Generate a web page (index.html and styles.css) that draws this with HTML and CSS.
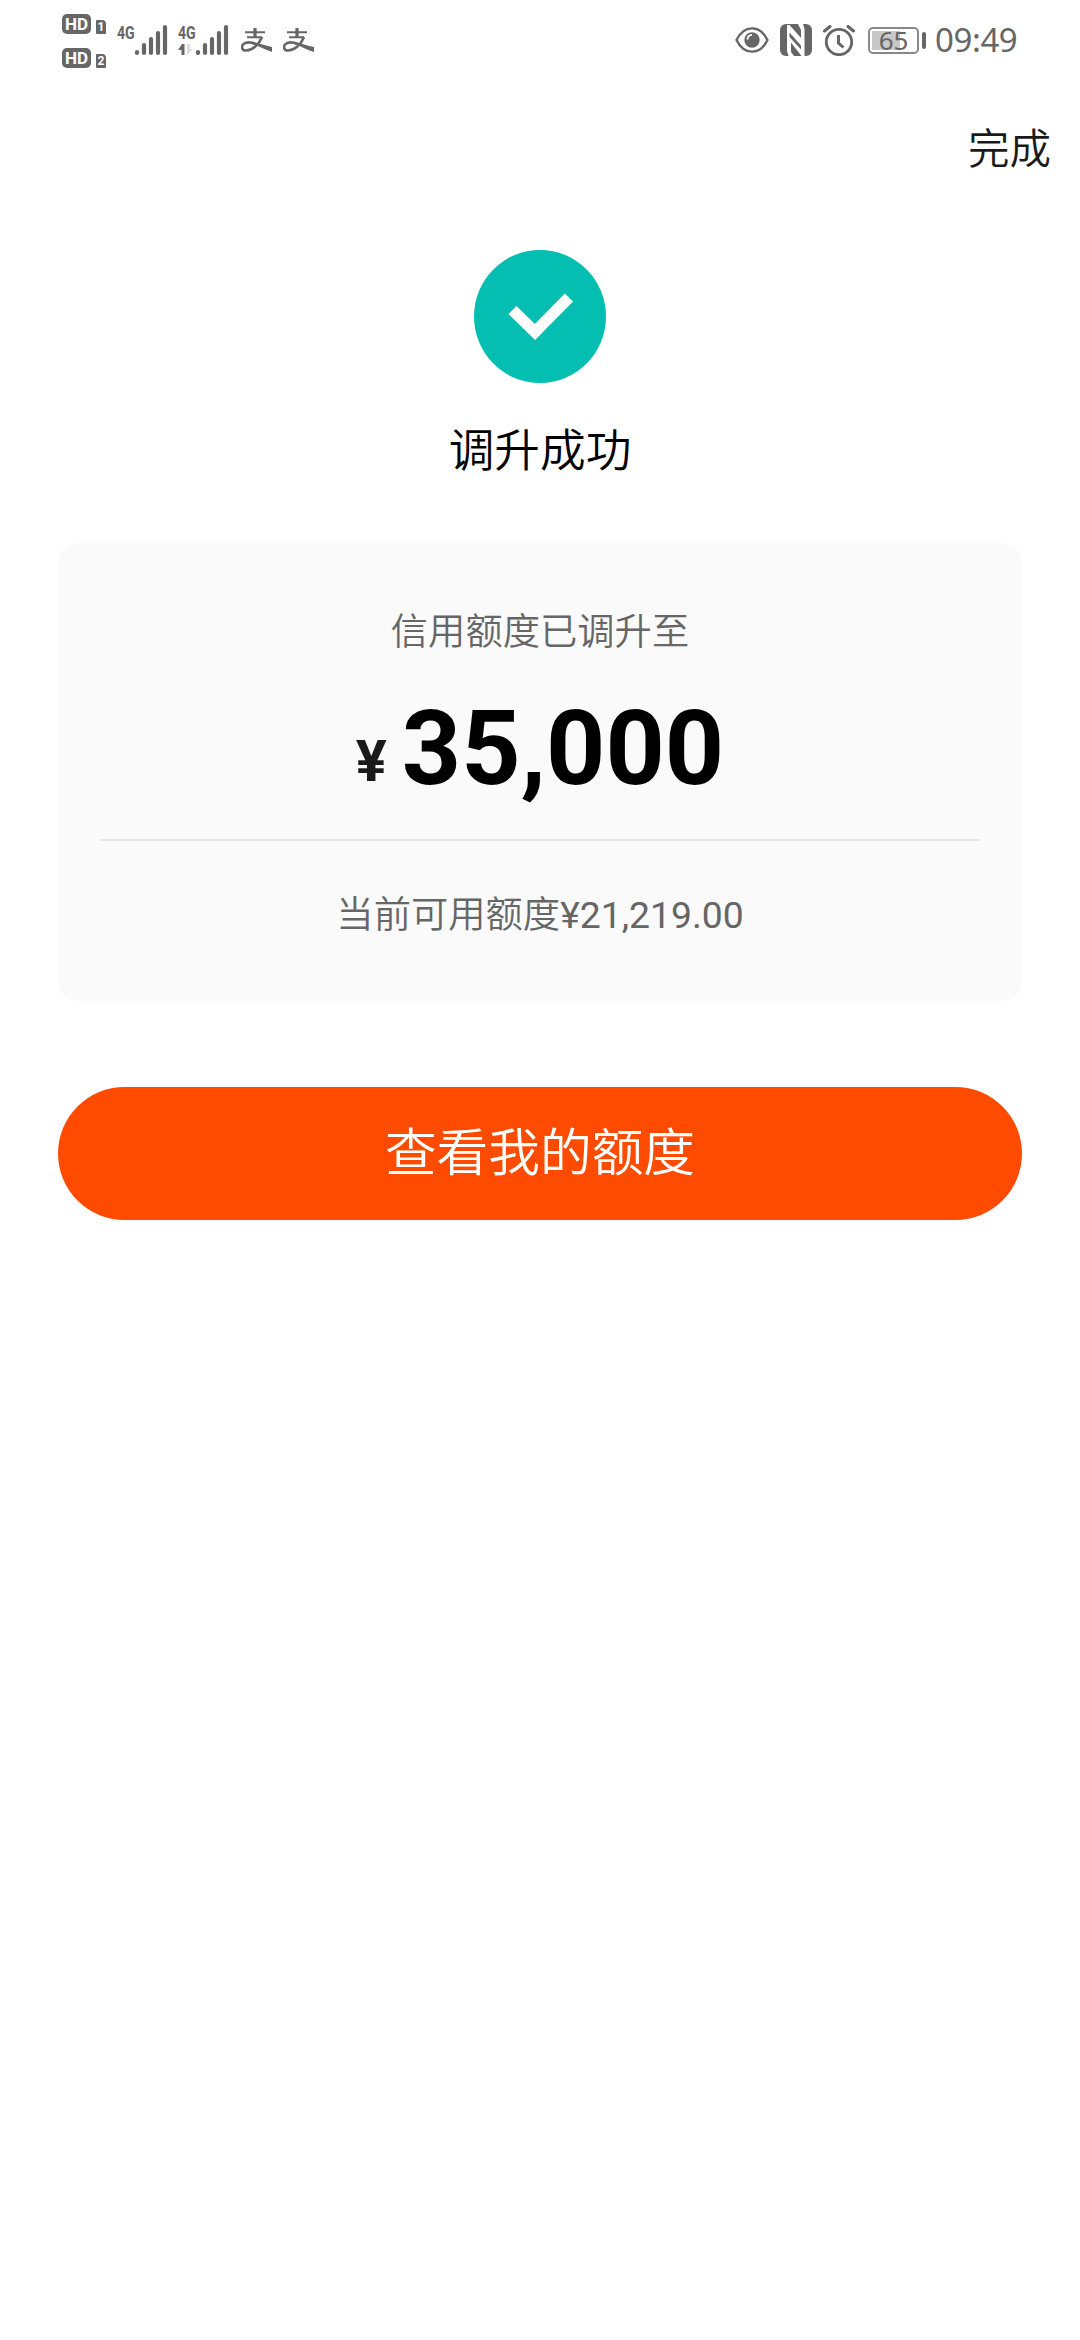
FILE: index.html
```html
<!DOCTYPE html>
<html lang="zh-CN">
<head>
<meta charset="utf-8">
<title>调升成功</title>
<link rel="stylesheet" href="styles.css">
</head>
<body>
<header class="status">
  <div class="hd-list">
    <div class="hd"><span class="hd-tag">HD</span><span class="sim">1</span></div>
    <div class="hd"><span class="hd-tag">HD</span><span class="sim">2</span></div>
  </div>
  <div class="net">
    <span class="gen">4G</span>
    <svg class="bars" width="34" height="32" viewBox="0 0 34 32"><path d="M3 29v-1M10 29v-8M17 29v-14M24 29v-20M31 29v-26" stroke="#666" stroke-width="4.2" stroke-linecap="round"/></svg>
  </div>
  <div class="net second">
    <span class="gen">4G</span>
    <svg class="arrows" width="16" height="12" viewBox="0 0 16 12"><path d="M0 6 4 0h2.500v11H3.500V6z" fill="#666"/><path d="M9 0v11l6-6h-3V0z" fill="#ddd"/></svg>
    <svg class="bars" width="34" height="32" viewBox="0 0 34 32"><path d="M3 29v-1M10 29v-8M17 29v-14M24 29v-20M31 29v-26" stroke="#666" stroke-width="4.2" stroke-linecap="round"/></svg>
  </div>
  <svg class="pay" width="32" height="25" viewBox="0 0 32 25"><path d="M4 4.3h20M6 9.3h15" stroke="#666" stroke-width="2"/><path d="M14 0v9" stroke="#666" stroke-width="3.2"/><path d="M21 9C18 17 11 22.500 5 22.500c-4 0-4.800-3.500-3-6 2.500-3 8-2.500 12-.5" fill="none" stroke="#666" stroke-width="2.600"/><path d="M11 13.500c6 1.500 12 4 20 5.500v5C24 22 17 18 11 15.500z" fill="#666"/></svg>
  <svg class="pay" width="32" height="25" viewBox="0 0 32 25"><path d="M4 4.3h20M6 9.3h15" stroke="#666" stroke-width="2"/><path d="M14 0v9" stroke="#666" stroke-width="3.2"/><path d="M21 9C18 17 11 22.500 5 22.500c-4 0-4.800-3.500-3-6 2.500-3 8-2.500 12-.5" fill="none" stroke="#666" stroke-width="2.600"/><path d="M11 13.500c6 1.500 12 4 20 5.500v5C24 22 17 18 11 15.500z" fill="#666"/></svg>
  <div class="right">
    <svg width="34" height="26" viewBox="0 0 34 26"><path d="M1.500 13C9-2.500 25-2.500 32.500 13 25 28.500 9 28.500 1.500 13z" fill="none" stroke="#666" stroke-width="2.400"/><circle cx="17" cy="13" r="7.700" fill="#666"/><path d="M12.500 12.500c0-3 2-4.500 4.500-4.700" fill="none" stroke="#fff" stroke-width="1.800"/></svg>
    <svg class="nfc" width="32" height="32" viewBox="0 0 32 32"><rect width="32" height="32" rx="6" fill="#666"/><path d="M7 1h2.500L21 14V6l-3-6h5l1.500 5v27h-3L11 18.500V28l3 4H8.500L7 27z" fill="#fff"/><path d="M9.500 8.500 21 21.500v4L9.500 13z" fill="#666"/></svg>
    <svg class="alarm" width="32" height="31" viewBox="0 0 32 31"><circle cx="16" cy="17" r="12.700" fill="none" stroke="#666" stroke-width="2.800"/><path d="M1.500 6 7 1.500M30.500 6 25 1.500" stroke="#666" stroke-width="3" stroke-linecap="round"/><path d="M15.500 10v8l5 4.500" fill="none" stroke="#666" stroke-width="3"/></svg>
    <div class="battery">65</div><i class="cap"></i>
    <span class="time">09:49</span>
  </div>
</header>
<nav class="nav">完成</nav>
<main class="main">
  <svg class="ok" width="132" height="134" viewBox="0 0 132 134"><ellipse cx="66" cy="66.500" rx="66" ry="66.500" fill="#04beb1"/><path d="m38.500 60 22.500 22 34-34.500" fill="none" stroke="#fff" stroke-width="11.500"/></svg>
  <h1 class="title">调升成功</h1>
  <section class="card">
    <p class="label">信用额度已调升至</p>
    <p class="amount"><span class="yen">¥</span><span class="num">35,000</span></p>
    <p class="avail">当前可用额度¥21,219.00</p>
  </section>
  <button class="btn">查看我的额度</button>
</main>
</body>
</html>
```
FILE: styles.css
```css
* { box-sizing: border-box; margin: 0; padding: 0; }
body { background: #fff; color: #000; font-family: Roboto, "Noto Sans CJK SC DemiLight", "Noto Sans CJK SC", sans-serif; width: 1080px; height: 2340px; overflow: hidden; }
svg { display: block; flex: none; }

.status { display: flex; align-items: flex-start; height: 80px; padding: 0 62px; color: #666; }
.hd-list { display: flex; flex-direction: column; gap: 14px; padding-top: 14px; width: 55px; flex: none; }
.hd { display: flex; align-items: flex-end; gap: 5px; height: 20px; }
.hd-tag { width: 29px; height: 20px; border-radius: 5px; background: #666; color: #fff; font: 700 17px/20px Roboto, sans-serif; text-align: center; }
.sim { width: 10px; height: 14px; border-radius: 1px 4px 1px 1px; background: #666; color: #fff; font: 700 12px/14px Roboto, sans-serif; text-align: center; }
.net { display: grid; grid-template-columns: 17px 34px; padding-top: 24px; width: 61px; flex: none; }
.gen { font: 700 19px/17px Roboto, sans-serif; transform: scaleX(.74); transform-origin: left; }
.net .bars { grid-column: 2; grid-row: 1 / 3; }
.arrows { margin-top: 3px; }
.second { width: 63px; }
.pay { margin: 28px 10px 0 0; }
.right { display: flex; align-items: center; margin-left: auto; margin-top: 24px; height: 32px; flex: none; }
.nfc { margin-left: 11px; }
.alarm { margin-left: 11px; }
.battery { margin-left: 13px; width: 51px; height: 27px; border: 2px solid #888; border-radius: 5px; background: linear-gradient(90deg, #c8c8c8 28px, transparent 28px) 2px 2px / 43px 19px no-repeat; font: 26px/23px "Noto Sans", sans-serif; text-align: center; }
.cap { width: 4px; height: 17px; background: #666; border-radius: 2px; margin-left: 3px; }
.time { width: 84px; margin: 0 -1px 0 9px; font: 33px/32px "Noto Sans", sans-serif; letter-spacing: -.4px; white-space: nowrap; }

.nav { height: 170px; padding: 40px 29px 0; text-align: right; font-size: 41.500px; line-height: 60px; color: #1a1a1a; }

.main { display: flex; flex-direction: column; align-items: center; padding: 0 58px; }
.title { margin-top: 34px; font-size: 45.700px; line-height: 68px; font-weight: 400; }
.card { width: 964px; height: 458px; margin-top: 57px; padding: 61px 43px 0; background: #fafafa; border-radius: 20px; text-align: center; }
.label, .avail { font-size: 37.300px; line-height: 56px; color: #666; }
.amount { height: 181px; display: flex; justify-content: center; align-items: baseline; border-bottom: 2px solid #e5e5e5; font-weight: 700; }
.yen { position: relative; top: -3px; font-size: 58px; color: #1a1a1a; margin-right: 15px; }
.num { font-size: 103.500px; line-height: 177px; }
.avail { margin-top: 46px; }
.btn { width: 964px; height: 133px; margin-top: 86px; border: 0; border-radius: 67px; background: #ff4b00; color: #fff; font: 400 51.700px/133px Roboto, "Noto Sans CJK SC DemiLight", "Noto Sans CJK SC", sans-serif; }
```
